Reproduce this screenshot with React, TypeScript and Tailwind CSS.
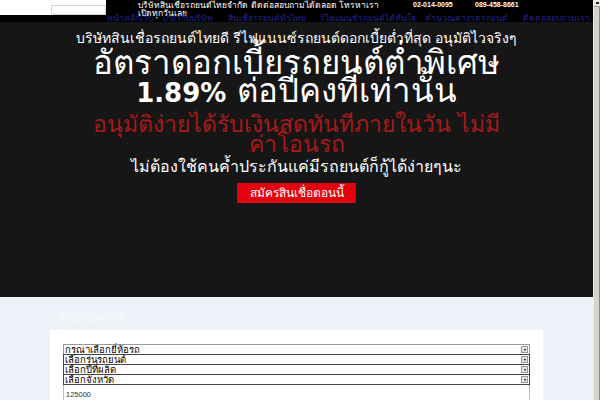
import React from 'react';

const NAV = [
  { label: 'หน้าหลักเว็บ', w: 'w-[56px]' },
  { label: 'เกี่ยวกับบริษัท', w: 'w-[65px]' },
  { label: 'สินเชื่อรถยนต์ทั่วไทย', w: 'w-[92px]' },
  { label: 'รีไฟแนนซ์รถยนต์ได้ทันใจ', w: 'w-[105px]' },
  { label: 'คำนวณค่างวดรถยนต์', w: 'w-[98px]' },
  { label: 'ติดต่อสอบถามเรา', w: 'w-auto' },
];

const SELECTS = ['กรุณาเลือกยี่ห้อรถ', 'เลือกรุ่นรถยนต์', 'เลือกปีที่ผลิต', 'เลือกจังหวัด'];

function Header() {
  return (
    <header className="bg-black h-[22px] flex flex-col shrink-0">
      <div className="flex h-[14px]">
        <div className="w-[106px] h-[15px] bg-white shrink-0 pl-[51px] pt-[5px] relative z-10">
          <div className="w-[55px] h-[10px] border border-gray-300 bg-white" />
        </div>
        <div className="flex flex-col pl-[32px] text-white">
          <div className="flex items-center h-[8px] mt-[1px] whitespace-nowrap">
            <span className="w-[275px] text-[8.5px] leading-[8px]">บริษัทสินเชื่อรถยนต์ไทยจำกัด ติดต่อสอบถามได้ตลอด โทรหาเรา</span>
            <span className="w-[62px] font-bold text-[7px] leading-[8px] font-['Liberation_Sans',sans-serif]">02-014-0095</span>
            <span className="font-bold text-[7px] leading-[8px] font-['Liberation_Sans',sans-serif]">089-458-8661</span>
          </div>
          <div className="text-[8.5px] leading-[6px] mt-[1px]">เปิดทุกวันเลย</div>
        </div>
      </div>
      <nav className="flex pl-[107px] h-[8px] mt-[1px] text-[8.5px] leading-[7px] text-[#23238f] whitespace-nowrap">
        {NAV.map((n) => (
          <a key={n.label} href="#" className={`${n.w} shrink-0`}>
            {n.label}
          </a>
        ))}
      </nav>
    </header>
  );
}

function Hero() {
  return (
    <section className="bg-[#161616] h-[275px] flex flex-col items-center pt-[9px] shrink-0">
      <div className="w-[450px] flex flex-col items-center text-center">
        <p className="text-[14px] leading-[15px] text-white whitespace-nowrap">
          บริษัทสินเชื่อรถยนต์ไทยดี รีไฟแนนซ์รถยนต์ดอกเบี้ยต่ำที่สุด อนุมัติไวจริงๆ
        </p>
        <h1 className="mt-[3px] text-[33px] leading-[28px] text-white whitespace-nowrap">
          อัตราดอกเบี้ยรถยนต์ต่ำพิเศษ
          <br />
          <span className="font-bold text-[26px] font-['DejaVu_Sans',sans-serif]">1.89%</span> ต่อปีคงที่เท่านั้น
        </h1>
        <p className="mt-[7px] text-[23px] leading-[20px] text-[#a51a1a]">
          อนุมัติง่ายได้รับเงินสดทันทีภายในวัน ไม่มี <span className="whitespace-nowrap">ค่าโอนรถ</span>
        </p>
        <p className="mt-[6px] text-[16px] leading-[14px] text-white whitespace-nowrap">
          ไม่ต้องใช้คนค้ำประกันแค่มีรถยนต์ก็กู้ได้ง่ายๆนะ
        </p>
        <button className="mt-[9px] w-[119px] h-[20px] bg-[#e3000f] text-white text-[12px] leading-[20px] whitespace-nowrap">
          สมัครสินเชื่อตอนนี้
        </button>
      </div>
    </section>
  );
}

function Calculator() {
  return (
    <section className="bg-[#eff2f8] flex-1 px-[50px] pt-[17px]">
      <h2 className="ml-[8px] text-[11px] leading-[10px] text-[#f7f9fd]">คำนวณค่างวด</h2>
      <div className="mt-[6px] bg-white h-[200px] px-[13px] pt-[14px] w-[493px]">
        {SELECTS.map((s, i) => (
          <div
            key={i}
            className={`flex h-[10px] border-x border-t bg-white ${i === 0 ? 'border-[#999]' : 'border-[#444]'} ${
              i === 3 ? 'h-[11px] border-b border-b-[#444]' : ''
            }`}
          >
            <span className="flex-1 text-[9.5px] leading-[9px] pl-[1px] text-black">{s}</span>
            <span className="w-[7px] my-[1px] mr-[1px] bg-[#e4e2dc] border border-[#999] flex items-center justify-center">
              <span className="w-0 h-0 border-l-[1.5px] border-r-[1.5px] border-t-2 border-transparent border-t-black" />
            </span>
          </div>
        ))}
        <div className="h-[20px] border-x border-[#bbb] text-[7.5px] leading-[8px] pt-[6px] text-[#333] pl-[2px] font-['Liberation_Sans',sans-serif]">
          125000
        </div>
      </div>
    </section>
  );
}

function Scrollbar() {
  return (
    <div className="w-[7px] bg-[#d6d3cc] border-l border-[#ecebe7] flex flex-col shrink-0">
      <div className="h-[7px] bg-[#ece9e2] border-b border-[#999] flex items-center justify-center">
        <span className="w-[3px] h-[2px] bg-[#222]" />
      </div>
      <div className="flex-1 flex justify-end">
        <div className="w-[1px] bg-[#8a8884]" />
      </div>
    </div>
  );
}

export default function App() {
  return (
    <div className="flex w-[600px] h-[400px] overflow-hidden font-['DejaVu_Sans',sans-serif]">
      <div className="flex-1 min-w-0 flex flex-col">
        <Header />
        <Hero />
        <Calculator />
      </div>
      <Scrollbar />
    </div>
  );
}
